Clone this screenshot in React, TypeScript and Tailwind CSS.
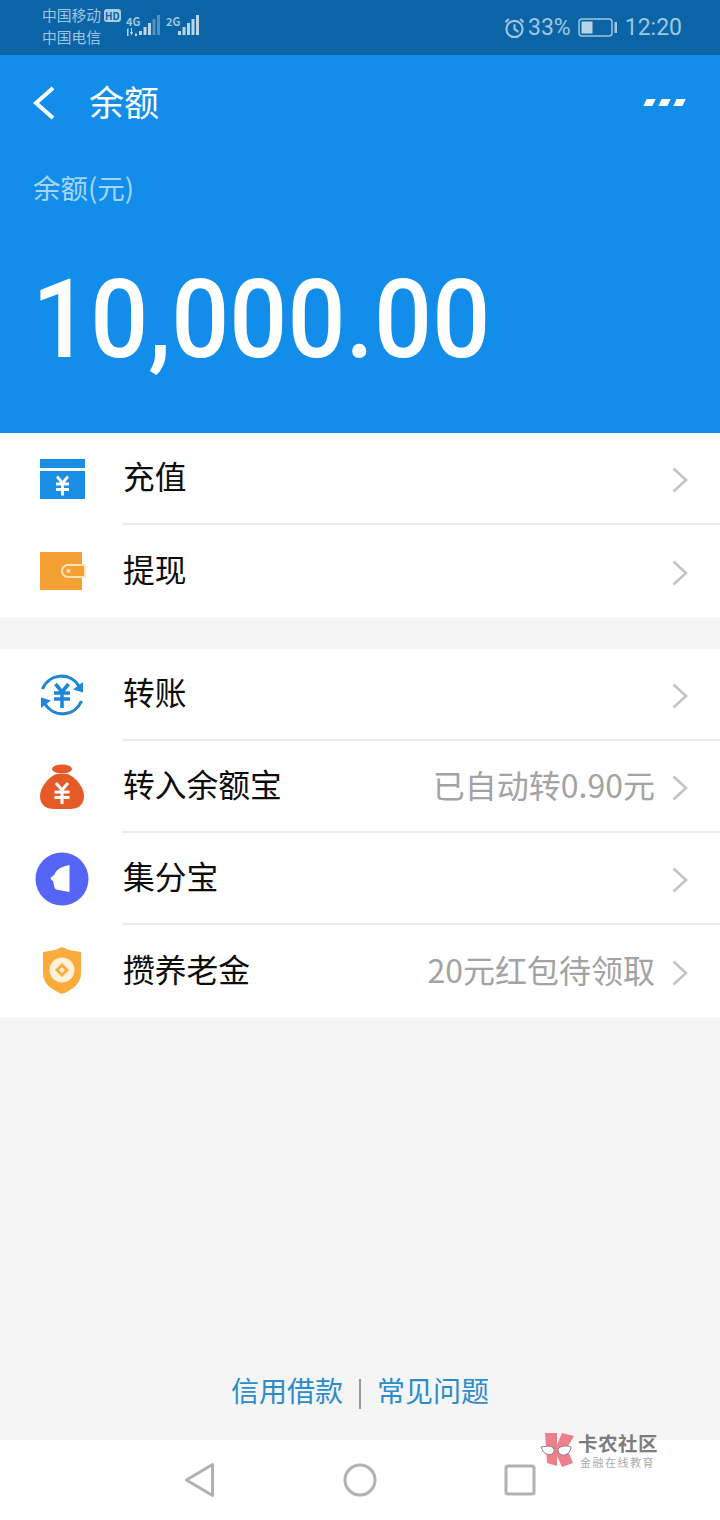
import React from 'react';

const cjk = { fontFamily: '"Noto Sans CJK SC", Roboto, sans-serif' };

const Chevron = () => (
  <svg width="18" height="28" viewBox="0 0 18 28" fill="none" className="mt-[3px] flex-shrink-0">
    <path d="M2.5 2.5 15 14 2.5 25.5" stroke="#c4c4c4" strokeWidth="2.6" />
  </svg>
);

const TopUpIcon = () => (
  <svg width="46" height="40" viewBox="0 0 46 40" className="ml-[1px]">
    <rect x="0" y="0" width="45" height="9" fill="#1a8de4" />
    <rect x="0" y="12" width="45" height="28" fill="#1a8de4" />
    <path d="M17 17.500 22.500 24 28 17.500M22.500 24V36.500M16 25H29M16 30.500H29" stroke="#fff" strokeWidth="2.800" fill="none" />
  </svg>
);

const WalletIcon = () => (
  <svg width="46" height="38" viewBox="0 0 46 38" className="ml-[1px]">
    <rect x="0" y="0" width="42" height="38" fill="#f5a033" />
    <path d="M45 13H28a6 6 0 0 0 0 12H45z" fill="#f5a033" stroke="#fde5b8" strokeWidth="2" />
    <circle cx="28.500" cy="19" r="2" fill="#fde5b8" />
  </svg>
);

const TransferIcon = () => (
  <svg width="46" height="46" viewBox="0 0 46 46" fill="none">
    <path d="M3.500 17A20.500 20.500 0 0 1 40 14" stroke="#1f87d6" strokeWidth="3.200" />
    <path d="M42.500 29A20.500 20.500 0 0 1 6 32" stroke="#1f87d6" strokeWidth="3.200" />
    <path d="M34 17.500 44 20.500 44 10z" fill="#1f87d6" />
    <path d="M12 28.500 2 25.500 2 36z" fill="#1f87d6" />
    <path d="M16.500 12 23 20 29.500 12M23 20V36M15 21H31M15 27H31" stroke="#1f87d6" strokeWidth="3.600" />
  </svg>
);

const BagIcon = () => (
  <svg width="44" height="46" viewBox="0 0 44 46">
    <ellipse cx="22" cy="5" rx="10" ry="4.500" fill="#e65a28" />
    <path d="M16 10h12c8 4 16 13 16 22 0 9-6 13-14 13H14C6 45 0 41 0 32c0-9 8-18 16-22z" fill="#e65a28" />
    <path d="M16 19 22 26 28 19M22 26V40M14.500 28H29.500M14.500 33.500H29.500" stroke="#fff" strokeWidth="3" fill="none" />
  </svg>
);

const PointsIcon = () => (
  <svg width="54" height="54" viewBox="0 0 54 54">
    <circle cx="27" cy="27" r="26.500" fill="#5565f6" />
    <path d="M34.500 13V40L21 37.500C19 36 19 32 18 29 16.500 28 15.500 27 15.500 26 17 24 19.500 23.500 20.500 20.500 23 16 29 14 34.500 13z" fill="#fff" />
  </svg>
);

const ShieldIcon = () => (
  <svg width="40" height="48" viewBox="0 0 40 48">
    <path d="M20 0 27 3 39 5V26C39 37 30 43 20 47 10 43 1 37 1 26V5L13 3z" fill="#fbab3c" />
    <circle cx="20" cy="23" r="12.500" fill="#fff1d9" />
    <path d="M20 16 27 23 20 30 13 23z" fill="#fbab3c" />
    <path d="M20 20 23 23 20 26 17 23z" fill="#fff1d9" />
  </svg>
);

const Row = ({ icon, label, note, divider }: { icon: React.ReactNode; label: string; note?: string; divider?: boolean }) => (
  <div className="flex h-[92px] items-stretch">
    <div className="-mr-[2px] flex w-[124px] flex-shrink-0 items-center justify-center">{icon}</div>
    <div className={`flex flex-1 items-center pr-[31px] ${divider ? 'border-b-2 border-[#ececec]' : ''}`}>
      <span className="-mt-[5px] flex-1 pl-[1px] text-[31.750px] leading-none text-[#0c0c0c]">{label}</span>
      {note && <span className="-mt-[5px] mr-[16px] text-[32px] leading-none text-[#a3a3a3]">{note}</span>}
      <Chevron />
    </div>
  </div>
);

const SignalBars = ({ dim }: { dim?: boolean }) => (
  <svg width="21" height="20" viewBox="0 0 21 20" fill="#bcd6ea" className="flex-shrink-0">
    <rect x="0" y="16" width="3" height="4" />
    <rect x="4.500" y="12" width="3" height="8" />
    <rect x="9" y="8" width="3" height="12" />
    <rect x="13.500" y="4" width="3" height="16" opacity={dim ? 0.4 : 1} />
    <rect x="18" y="0" width="3" height="20" opacity={dim ? 0.4 : 1} />
  </svg>
);

export default function App() {
  return (
    <div className="relative flex h-[1520px] w-[720px] flex-col overflow-hidden bg-[#f5f5f5]" style={cjk}>
      <div className="flex h-[55px] items-center justify-between bg-[#0b64a6] pl-[42px] pr-[38px] text-[#9fc6e2]">
        <div className="-mt-[3px] flex items-start">
          <div className="w-[84px] text-[14.750px] leading-[22px]">
            <div className="flex items-center gap-[3px]">
              <span className="flex-shrink-0">中国移动</span>
              <span className="rounded-[3px] bg-[#a9cde8] px-[1px] text-[10px] font-bold leading-[13px] text-[#0b64a6]">HD</span>
            </div>
            <div>中国电信</div>
          </div>
          <div className="mt-[11px] flex w-[40px] items-start text-[11px] font-bold leading-none">
            <div className="flex w-[13px] flex-col">
              <span className="leading-[12px]">4G</span>
              <svg width="12" height="8" viewBox="0 0 12 8" fill="#bcd6ea" className="mt-[1px]">
                <path d="M1 1 2.500 0V8H1zM4 4H5V0H6V4H7L5.500 7.500zM9 5.500H11V8H9z" />
              </svg>
            </div>
            <SignalBars dim />
          </div>
          <div className="mt-[11px] flex items-start text-[11px] font-bold leading-none">
            <span className="w-[12px] leading-[12px]">2G</span>
            <SignalBars />
          </div>
        </div>
        <div className="flex items-center text-[23px] leading-none" style={{ fontFamily: 'Roboto, sans-serif' }}>
          <svg width="21" height="22" viewBox="0 0 22 22" fill="none" stroke="#9fc6e2" strokeWidth="2.200" className="mr-[3px]">
            <circle cx="11" cy="12" r="8.500" />
            <path d="M11 7v5l4 3M1.500 5 5 1.500M20.500 5 17 1.500" />
          </svg>
          <span>33%</span>
          <svg width="40" height="20" viewBox="0 0 40 20" fill="none" className="ml-[7px] mr-[7px]">
            <rect x="1" y="1" width="33" height="17" rx="3" stroke="#9fc6e2" strokeWidth="1.500" />
            <rect x="3.500" y="3.500" width="11" height="12" fill="#b6d3e8" />
            <rect x="36.500" y="4" width="2.500" height="11" fill="#9fc6e2" />
          </svg>
          <span>12:20</span>
        </div>
      </div>

      <div className="h-[378px] bg-[#128de9] text-white">
        <div className="flex h-[95px] items-center pl-[32px] pr-[36px]">
          <svg width="24" height="34" viewBox="0 0 24 34" fill="none">
            <path d="M21 2 4 17 21 32" stroke="#fff" strokeWidth="4" />
          </svg>
          <span className="-mt-[4px] ml-[33px] flex-1 text-[35px] leading-none">余额</span>
          <div className="flex gap-[6px]">
            <span className="h-[7px] w-[9px] -skew-x-[25deg] bg-white" />
            <span className="h-[7px] w-[9px] -skew-x-[25deg] bg-white" />
            <span className="h-[7px] w-[9px] -skew-x-[25deg] bg-white" />
          </div>
        </div>
        <div className="mt-[24px] pl-[33px] text-[27.500px] leading-none text-[#a5d6fa]">余额(元)</div>
        <div className="mt-[63px] pl-[32px]">
          <div className="origin-left scale-x-[0.93] text-[110px] font-medium leading-none" style={{ fontFamily: 'Roboto, sans-serif' }}>10,000.00</div>
        </div>
      </div>

      <div className="bg-white">
        <Row icon={<TopUpIcon />} label="充值" divider />
        <Row icon={<WalletIcon />} label="提现" />
      </div>

      <div className="mt-[32px] bg-white">
        <Row icon={<TransferIcon />} label="转账" divider />
        <Row icon={<BagIcon />} label="转入余额宝" note="已自动转0.90元" divider />
        <Row icon={<PointsIcon />} label="集分宝" divider />
        <Row icon={<ShieldIcon />} label="攒养老金" note="20元红包待领取" />
      </div>

      <div className="flex flex-1 items-end justify-center pb-[31px] text-[28px] leading-none text-[#2b8ccc]">
        <span className="mb-[5px]">信用借款</span>
        <span className="mx-[16px] h-[30px] w-[2px] bg-[#9a9a9a]" />
        <span className="mb-[5px]">常见问题</span>
      </div>

      <div className="flex h-[80px] items-center justify-center gap-[127px] bg-white">
        <svg width="32" height="36" viewBox="0 0 32 36" fill="none">
          <path d="M28.500 2.500V33.500L2.500 18z" stroke="#b1b1b1" strokeWidth="3" strokeLinejoin="round" />
        </svg>
        <svg width="34" height="34" viewBox="0 0 34 34" fill="none">
          <circle cx="17" cy="17" r="15" stroke="#b1b1b1" strokeWidth="3" />
        </svg>
        <svg width="32" height="32" viewBox="0 0 32 32" fill="none">
          <rect x="2" y="2" width="28" height="28" rx="2" stroke="#b1b1b1" strokeWidth="3" />
        </svg>
      </div>

      <div className="absolute left-[540px] top-[1432px] flex items-start gap-[2px] opacity-90">
        <svg width="36" height="36" viewBox="0 0 36 36">
          <path d="M5 1H17V13L22 1 34 4 27 16 33 31 22 35 17 24V34L7 31z" fill="#ea7480" />
          <path d="M1 15 8 14C12 14 15 17 14 20 12 24 5 23 3 19zM18 17C20 14 27 13 31 15 31 20 26 24 22 23 19 22 18 20 18 17z" fill="#fff" stroke="#777" strokeWidth="1" />
        </svg>
        <div className="flex flex-col leading-none">
          <span className="text-[19.500px] font-bold leading-[22px] tracking-[0.500px] text-[#6f6f70]">卡农社区</span>
          <span className="mt-[1px] pl-[2px] text-[11px] leading-[14px] tracking-[1.500px] text-[#a4a4a4]">金融在线教育</span>
        </div>
      </div>
    </div>
  );
}
